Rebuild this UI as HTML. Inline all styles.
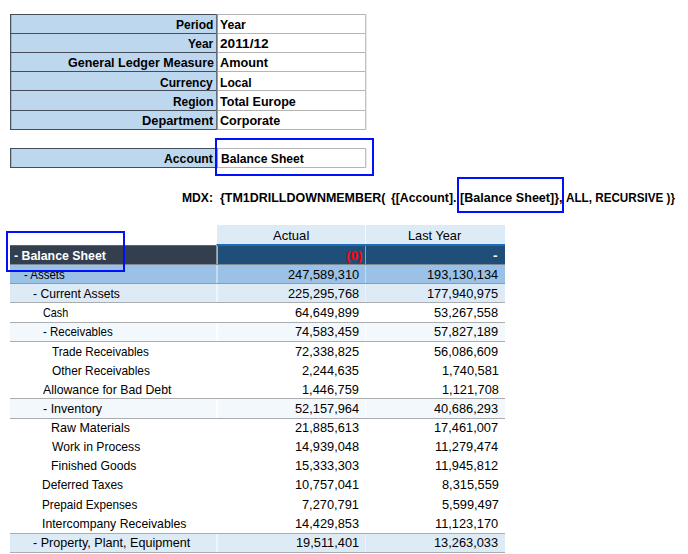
<!DOCTYPE html>
<html><head><meta charset="utf-8"><style>
html,body{margin:0;padding:0;background:#fff;width:688px;height:554px;overflow:hidden;position:relative}
.r{position:absolute}
.t{position:absolute;white-space:pre;font-family:"Liberation Sans",sans-serif;line-height:20px;transform-origin:0 0}
.b{position:absolute;border:2px solid #0010ff}
</style></head><body>
<div class="r" style="left:10px;top:14px;width:207px;height:115px;background:#bdd7ee"></div><div class="r" style="left:11px;top:15px;width:1px;height:114px;background:#a3b8ca"></div><div class="r" style="left:10px;top:14px;width:206px;height:1px;background:#434e5a"></div><div class="r" style="left:216px;top:14px;width:150px;height:1px;background:#b4b4b4"></div><div class="r" style="left:10px;top:33px;width:206px;height:1px;background:#434e5a"></div><div class="r" style="left:216px;top:33px;width:150px;height:1px;background:#b4b4b4"></div><div class="r" style="left:10px;top:52px;width:206px;height:1px;background:#434e5a"></div><div class="r" style="left:216px;top:52px;width:150px;height:1px;background:#b4b4b4"></div><div class="r" style="left:10px;top:71px;width:206px;height:1px;background:#434e5a"></div><div class="r" style="left:216px;top:71px;width:150px;height:1px;background:#b4b4b4"></div><div class="r" style="left:10px;top:90px;width:206px;height:1px;background:#434e5a"></div><div class="r" style="left:216px;top:90px;width:150px;height:1px;background:#b4b4b4"></div><div class="r" style="left:10px;top:110px;width:206px;height:1px;background:#434e5a"></div><div class="r" style="left:216px;top:110px;width:150px;height:1px;background:#b4b4b4"></div><div class="r" style="left:10px;top:129px;width:206px;height:1px;background:#434e5a"></div><div class="r" style="left:216px;top:129px;width:150px;height:1px;background:#b4b4b4"></div><div class="r" style="left:10px;top:14px;width:1px;height:116px;background:#4b5057"></div><div class="r" style="left:216px;top:14px;width:1px;height:116px;background:#65717d"></div><div class="r" style="left:217px;top:14px;width:1px;height:116px;background:#9a9a9a"></div><div class="r" style="left:365px;top:14px;width:1px;height:116px;background:#c2c2c2"></div><div class="r" style="left:366px;top:14px;width:1px;height:116px;background:#e8e8e8"></div><div class="r" style="left:10px;top:148px;width:207px;height:19px;background:#bdd7ee"></div><div class="r" style="left:11px;top:149px;width:1px;height:18px;background:#a3b8ca"></div><div class="r" style="left:10px;top:148px;width:206px;height:1px;background:#434e5a"></div><div class="r" style="left:216px;top:148px;width:150px;height:1px;background:#b4b4b4"></div><div class="r" style="left:10px;top:167px;width:206px;height:1px;background:#434e5a"></div><div class="r" style="left:216px;top:167px;width:150px;height:1px;background:#b4b4b4"></div><div class="r" style="left:10px;top:148px;width:1px;height:20px;background:#4b5057"></div><div class="r" style="left:216px;top:148px;width:1px;height:20px;background:#65717d"></div><div class="r" style="left:217px;top:148px;width:1px;height:20px;background:#9a9a9a"></div><div class="r" style="left:365px;top:148px;width:1px;height:20px;background:#c2c2c2"></div><div class="r" style="left:366px;top:148px;width:1px;height:20px;background:#e8e8e8"></div><div class="r" style="left:217px;top:225px;width:288px;height:19px;background:#ddebf7"></div><div class="r" style="left:365px;top:225px;width:1px;height:19px;background:#f7fafd"></div><div class="r" style="left:217px;top:244px;width:288px;height:2px;background:#1c6dbd"></div><div class="r" style="left:216px;top:244px;width:1px;height:2px;background:#8fb5dd"></div><div class="r" style="left:10px;top:245px;width:206px;height:19px;background:#333f4f"></div><div class="r" style="left:10px;top:245px;width:206px;height:1px;background:#5f646b"></div><div class="r" style="left:218px;top:246px;width:287px;height:18px;background:#1f4e78"></div><div class="r" style="left:216px;top:246px;width:1px;height:18px;background:#8e949b"></div><div class="r" style="left:217px;top:246px;width:1px;height:18px;background:#9bb2c9"></div><div class="r" style="left:365px;top:246px;width:1px;height:18px;background:#8aa5bf"></div><div class="r" style="left:10px;top:264px;width:495px;height:1px;background:#7d8b99"></div><div class="r" style="left:10px;top:265px;width:495px;height:18px;background:#9bc2e6"></div><div class="r" style="left:216px;top:265px;width:2px;height:18px;background:#c5dbef"></div><div class="r" style="left:365px;top:265px;width:1px;height:18px;background:#c5dbef"></div><div class="r" style="left:10px;top:284px;width:495px;height:18px;background:#ddebf7"></div><div class="r" style="left:216px;top:284px;width:2px;height:18px;background:#eef4fb"></div><div class="r" style="left:365px;top:284px;width:1px;height:18px;background:#eef4fb"></div><div class="r" style="left:10px;top:323px;width:495px;height:18px;background:#f3f8fc"></div><div class="r" style="left:216px;top:323px;width:2px;height:18px;background:#fbfdfe"></div><div class="r" style="left:365px;top:323px;width:1px;height:18px;background:#fbfdfe"></div><div class="r" style="left:10px;top:399px;width:495px;height:19px;background:#f3f8fc"></div><div class="r" style="left:216px;top:399px;width:2px;height:19px;background:#fbfdfe"></div><div class="r" style="left:365px;top:399px;width:1px;height:19px;background:#fbfdfe"></div><div class="r" style="left:10px;top:534px;width:495px;height:18px;background:#ddebf7"></div><div class="r" style="left:216px;top:534px;width:2px;height:18px;background:#eef4fb"></div><div class="r" style="left:365px;top:534px;width:1px;height:18px;background:#eef4fb"></div><div class="r" style="left:10px;top:283px;width:495px;height:1px;background:#8b9cae"></div><div class="r" style="left:10px;top:302px;width:495px;height:1px;background:#aaacaf"></div><div class="r" style="left:10px;top:322px;width:495px;height:1px;background:#aaacaf"></div><div class="r" style="left:10px;top:341px;width:495px;height:1px;background:#aaacaf"></div><div class="r" style="left:10px;top:398px;width:495px;height:1px;background:#aaacaf"></div><div class="r" style="left:10px;top:418px;width:495px;height:1px;background:#aaacaf"></div><div class="r" style="left:10px;top:533px;width:495px;height:1px;background:#aaacaf"></div><div class="r" style="left:10px;top:552px;width:495px;height:1px;background:#aaacaf"></div>
<div class="t" style="left:175.80px;top:15.00px;transform:scaleX(0.9232);color:#000;font-size:13px;font-weight:bold">Period</div><div class="t" style="left:188.10px;top:34.20px;transform:scaleX(0.9156);color:#000;font-size:13px;font-weight:bold">Year</div><div class="t" style="left:67.90px;top:53.40px;transform:scaleX(0.9624);color:#000;font-size:13px;font-weight:bold">General Ledger Measure</div><div class="t" style="left:160.00px;top:72.60px;transform:scaleX(0.9248);color:#000;font-size:13px;font-weight:bold">Currency</div><div class="t" style="left:173.00px;top:91.80px;transform:scaleX(0.9181);color:#000;font-size:13px;font-weight:bold">Region</div><div class="t" style="left:141.60px;top:111.00px;transform:scaleX(0.9862);color:#000;font-size:13px;font-weight:bold">Department</div><div class="t" style="left:164.30px;top:149.40px;transform:scaleX(0.9398);color:#000;font-size:13px;font-weight:bold">Account</div><div class="t" style="left:219.80px;top:15.00px;transform:scaleX(0.9411);color:#000;font-size:13px;font-weight:bold">Year</div><div class="t" style="left:220.20px;top:34.20px;transform:scaleX(1.0512);color:#000;font-size:13px;font-weight:bold">2011/12</div><div class="t" style="left:220.00px;top:53.40px;transform:scaleX(0.9765);color:#000;font-size:13px;font-weight:bold">Amount</div><div class="t" style="left:220.00px;top:72.60px;transform:scaleX(0.9298);color:#000;font-size:13px;font-weight:bold">Local</div><div class="t" style="left:220.00px;top:91.80px;transform:scaleX(0.9661);color:#000;font-size:13px;font-weight:bold">Total Europe</div><div class="t" style="left:220.00px;top:111.00px;transform:scaleX(0.9695);color:#000;font-size:13px;font-weight:bold">Corporate</div><div class="t" style="left:220.90px;top:149.40px;transform:scaleX(0.9325);color:#000;font-size:13px;font-weight:bold">Balance Sheet</div><div class="t" style="left:181.50px;top:187.80px;transform:scaleX(0.9335);color:#000;font-size:13px;font-weight:bold">MDX:</div><div class="t" style="left:219.70px;top:187.80px;transform:scaleX(0.9587);color:#000;font-size:13px;font-weight:bold">{TM1DRILLDOWNMEMBER(</div><div class="t" style="left:390.90px;top:187.80px;transform:scaleX(0.9430);color:#000;font-size:13px;font-weight:bold">{[Account].</div><div class="t" style="left:460.00px;top:187.80px;transform:scaleX(0.9660);color:#000;font-size:13px;font-weight:bold">[Balance Sheet]},</div><div class="t" style="left:566.00px;top:187.80px;transform:scaleX(0.8987);color:#000;font-size:13px;font-weight:bold">ALL, RECURSIVE )}</div><div class="t" style="left:273.40px;top:226.04px;transform:scaleX(1.0043);color:#000;font-size:13px;font-weight:normal">Actual</div><div class="t" style="left:407.72px;top:226.04px;transform:scaleX(0.9811);color:#000;font-size:13px;font-weight:normal">Last Year</div><div class="t" style="left:13.75px;top:245.87px;transform:scaleX(0.9489);color:#fff;font-size:13px;font-weight:bold">- Balance Sheet</div><div class="t" style="left:346.40px;top:245.87px;transform:scaleX(1.0412);color:#ff0000;font-size:13px;font-weight:bold">(0)</div><div class="t" style="left:492.60px;top:245.87px;transform:scaleX(1.0500);color:#fff;font-size:13px;font-weight:bold">-</div><div class="t" style="left:23.75px;top:265.00px;transform:scaleX(0.8798);color:#000;font-size:13px;font-weight:normal">- Assets</div><div class="t" style="left:33.25px;top:284.13px;transform:scaleX(0.9321);color:#000;font-size:13px;font-weight:normal">- Current Assets</div><div class="t" style="left:42.70px;top:303.26px;transform:scaleX(0.8301);color:#000;font-size:13px;font-weight:normal">Cash</div><div class="t" style="left:42.70px;top:322.39px;transform:scaleX(0.8845);color:#000;font-size:13px;font-weight:normal">- Receivables</div><div class="t" style="left:52.30px;top:341.52px;transform:scaleX(0.8985);color:#000;font-size:13px;font-weight:normal">Trade Receivables</div><div class="t" style="left:52.30px;top:360.65px;transform:scaleX(0.9149);color:#000;font-size:13px;font-weight:normal">Other Receivables</div><div class="t" style="left:42.70px;top:379.78px;transform:scaleX(0.9454);color:#000;font-size:13px;font-weight:normal">Allowance for Bad Debt</div><div class="t" style="left:42.70px;top:398.91px;transform:scaleX(0.9626);color:#000;font-size:13px;font-weight:normal">- Inventory</div><div class="t" style="left:51.34px;top:418.04px;transform:scaleX(0.9590);color:#000;font-size:13px;font-weight:normal">Raw Materials</div><div class="t" style="left:52.30px;top:437.17px;transform:scaleX(0.9347);color:#000;font-size:13px;font-weight:normal">Work in Process</div><div class="t" style="left:51.36px;top:456.30px;transform:scaleX(0.9376);color:#000;font-size:13px;font-weight:normal">Finished Goods</div><div class="t" style="left:41.78px;top:475.43px;transform:scaleX(0.9218);color:#000;font-size:13px;font-weight:normal">Deferred Taxes</div><div class="t" style="left:41.80px;top:494.56px;transform:scaleX(0.9028);color:#000;font-size:13px;font-weight:normal">Prepaid Expenses</div><div class="t" style="left:41.76px;top:513.69px;transform:scaleX(0.9424);color:#000;font-size:13px;font-weight:normal">Intercompany Receivables</div><div class="t" style="left:32.80px;top:532.82px;transform:scaleX(0.9685);color:#000;font-size:13px;font-weight:normal">- Property, Plant, Equipment</div><div class="t" style="left:287.80px;top:265.00px;transform:scaleX(0.9852);color:#000;font-size:13px;font-weight:normal">247,589,310</div><div class="t" style="left:427.30px;top:265.00px;transform:scaleX(0.9852);color:#000;font-size:13px;font-weight:normal">193,130,134</div><div class="t" style="left:287.80px;top:284.13px;transform:scaleX(0.9852);color:#000;font-size:13px;font-weight:normal">225,295,768</div><div class="t" style="left:427.30px;top:284.13px;transform:scaleX(0.9852);color:#000;font-size:13px;font-weight:normal">177,940,975</div><div class="t" style="left:294.92px;top:303.26px;transform:scaleX(0.9852);color:#000;font-size:13px;font-weight:normal">64,649,899</div><div class="t" style="left:434.42px;top:303.26px;transform:scaleX(0.9852);color:#000;font-size:13px;font-weight:normal">53,267,558</div><div class="t" style="left:294.92px;top:322.39px;transform:scaleX(0.9852);color:#000;font-size:13px;font-weight:normal">74,583,459</div><div class="t" style="left:434.42px;top:322.39px;transform:scaleX(0.9852);color:#000;font-size:13px;font-weight:normal">57,827,189</div><div class="t" style="left:294.92px;top:341.52px;transform:scaleX(0.9852);color:#000;font-size:13px;font-weight:normal">72,338,825</div><div class="t" style="left:434.42px;top:341.52px;transform:scaleX(0.9852);color:#000;font-size:13px;font-weight:normal">56,086,609</div><div class="t" style="left:302.05px;top:360.65px;transform:scaleX(0.9852);color:#000;font-size:13px;font-weight:normal">2,244,635</div><div class="t" style="left:441.55px;top:360.65px;transform:scaleX(0.9852);color:#000;font-size:13px;font-weight:normal">1,740,581</div><div class="t" style="left:302.05px;top:379.78px;transform:scaleX(0.9852);color:#000;font-size:13px;font-weight:normal">1,446,759</div><div class="t" style="left:441.55px;top:379.78px;transform:scaleX(0.9852);color:#000;font-size:13px;font-weight:normal">1,121,708</div><div class="t" style="left:294.92px;top:398.91px;transform:scaleX(0.9852);color:#000;font-size:13px;font-weight:normal">52,157,964</div><div class="t" style="left:434.42px;top:398.91px;transform:scaleX(0.9852);color:#000;font-size:13px;font-weight:normal">40,686,293</div><div class="t" style="left:294.92px;top:418.04px;transform:scaleX(0.9852);color:#000;font-size:13px;font-weight:normal">21,885,613</div><div class="t" style="left:434.42px;top:418.04px;transform:scaleX(0.9852);color:#000;font-size:13px;font-weight:normal">17,461,007</div><div class="t" style="left:294.92px;top:437.17px;transform:scaleX(0.9852);color:#000;font-size:13px;font-weight:normal">14,939,048</div><div class="t" style="left:435.37px;top:437.17px;transform:scaleX(0.9852);color:#000;font-size:13px;font-weight:normal">11,279,474</div><div class="t" style="left:294.92px;top:456.30px;transform:scaleX(0.9852);color:#000;font-size:13px;font-weight:normal">15,333,303</div><div class="t" style="left:435.37px;top:456.30px;transform:scaleX(0.9852);color:#000;font-size:13px;font-weight:normal">11,945,812</div><div class="t" style="left:294.92px;top:475.43px;transform:scaleX(0.9852);color:#000;font-size:13px;font-weight:normal">10,757,041</div><div class="t" style="left:441.55px;top:475.43px;transform:scaleX(0.9852);color:#000;font-size:13px;font-weight:normal">8,315,559</div><div class="t" style="left:302.05px;top:494.56px;transform:scaleX(0.9852);color:#000;font-size:13px;font-weight:normal">7,270,791</div><div class="t" style="left:441.55px;top:494.56px;transform:scaleX(0.9852);color:#000;font-size:13px;font-weight:normal">5,599,497</div><div class="t" style="left:294.92px;top:513.69px;transform:scaleX(0.9852);color:#000;font-size:13px;font-weight:normal">14,429,853</div><div class="t" style="left:435.37px;top:513.69px;transform:scaleX(0.9852);color:#000;font-size:13px;font-weight:normal">11,123,170</div><div class="t" style="left:295.87px;top:532.82px;transform:scaleX(0.9852);color:#000;font-size:13px;font-weight:normal">19,511,401</div><div class="t" style="left:434.42px;top:532.82px;transform:scaleX(0.9852);color:#000;font-size:13px;font-weight:normal">13,263,033</div>
<div class="b" style="left:215px;top:138px;width:155px;height:34px"></div><div class="b" style="left:457px;top:177px;width:103px;height:32px"></div><div class="b" style="left:6px;top:231px;width:115px;height:37px"></div>
</body></html>
